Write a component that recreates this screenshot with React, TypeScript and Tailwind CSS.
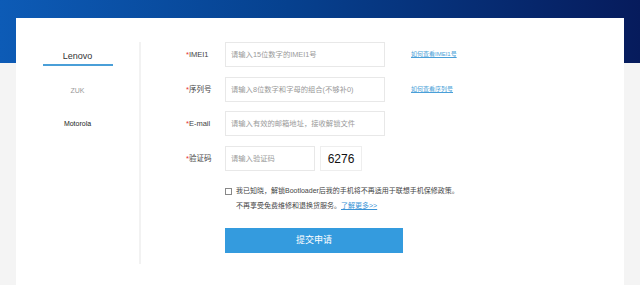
export default function App() {
  const rows = [
    { label: "IMEI1", ph: "请输入15位数字的IMEI1号", link: "如何查看IMEI1号" },
    { label: "序列号", ph: "请输入8位数字和字母的组合(不够补0)", link: "如何查看序列号" },
    { label: "E-mail", ph: "请输入有效的邮箱地址，接收解锁文件", link: "" },
  ];
  return (
    <div className="w-[640px] h-[285px] overflow-hidden bg-[linear-gradient(180deg,transparent_63px,#f4f4f4_63px),linear-gradient(90deg,#0d5bb6_0%,#06418f_45%,#061b5c_100%)] font-['Liberation_Sans','Noto_Sans_CJK_SC',sans-serif] pt-[18px] px-[16px]">
      <div className="bg-white h-[300px] flex">
        {/* left nav */}
        <div className="w-[123px] flex flex-col items-center pt-[32px]">
          <div className="text-[9px] leading-[12px] text-[#333]">Lenovo</div>
          <div className="w-[70px] h-[2px] bg-[#4a9fd8] mt-[2px]" />
          <div className="text-[7px] leading-[10px] text-[#999] mt-[20px]">ZUK</div>
          <div className="text-[7px] leading-[10px] text-[#222] mt-[23px]">Motorola</div>
        </div>
        {/* divider */}
        <div className="w-[2px] h-[222px] mt-[24px] bg-[#f2f2f2]" />
        {/* form */}
        <div className="flex flex-col pt-[24px]">
          {rows.map((r, i) => (
            <div
              key={r.label}
              className={
                "flex items-center h-[25px] " +
                (i === 1 ? "mt-[10px]" : i === 2 ? "mt-[9px]" : "")
              }
            >
              <div className="ml-[45px] w-[39px] text-[7.5px] text-[#444] whitespace-nowrap">
                <span className="text-[#e53333]">*</span>
                {r.label}
              </div>
              <input
                readOnly
                placeholder={r.ph}
                className="w-[160px] h-[25px] border border-[#e8e8e8] px-[5px] text-[7.3px] outline-none placeholder:text-[#9a9a9a]"
              />
              {r.link && (
                <a className="ml-[26px] text-[6px] text-[#4a9fd8] underline whitespace-nowrap">
                  {r.link}
                </a>
              )}
            </div>
          ))}
          <div className="flex items-center h-[25px] mt-[10px]">
            <div className="ml-[45px] w-[39px] text-[7.5px] text-[#444] whitespace-nowrap">
              <span className="text-[#e53333]">*</span>验证码
            </div>
            <input
              readOnly
              placeholder="请输入验证码"
              className="w-[90px] h-[25px] border border-[#e8e8e8] px-[5px] text-[7.3px] outline-none placeholder:text-[#9a9a9a]"
            />
            <div className="ml-[5px] w-[42px] h-[25px] border border-[#eeeeee] flex items-center justify-center text-[12px] font-medium text-[#111]">
              6276
            </div>
          </div>
          <div className="ml-[84px] mt-[13px] text-[7px] text-[#444]">
            <div className="flex items-center h-[15px]">
              <span className="w-[7px] h-[7px] border border-[#888] bg-white mr-[4px]" />
              <span className="whitespace-nowrap">
                我已知晓，解锁Bootloader后我的手机将不再适用于联想手机保修政策。
              </span>
            </div>
            <div className="flex items-center h-[15px] pl-[11px] whitespace-nowrap">
              不再享受免费维修和退换货服务。
              <a className="text-[#3a93d6] underline">了解更多&gt;&gt;</a>
            </div>
          </div>
          <button className="ml-[84px] mt-[14px] w-[178px] h-[25px] bg-[#349bde] text-white text-[9px]">
            提交申请
          </button>
        </div>
      </div>
    </div>
  );
}
